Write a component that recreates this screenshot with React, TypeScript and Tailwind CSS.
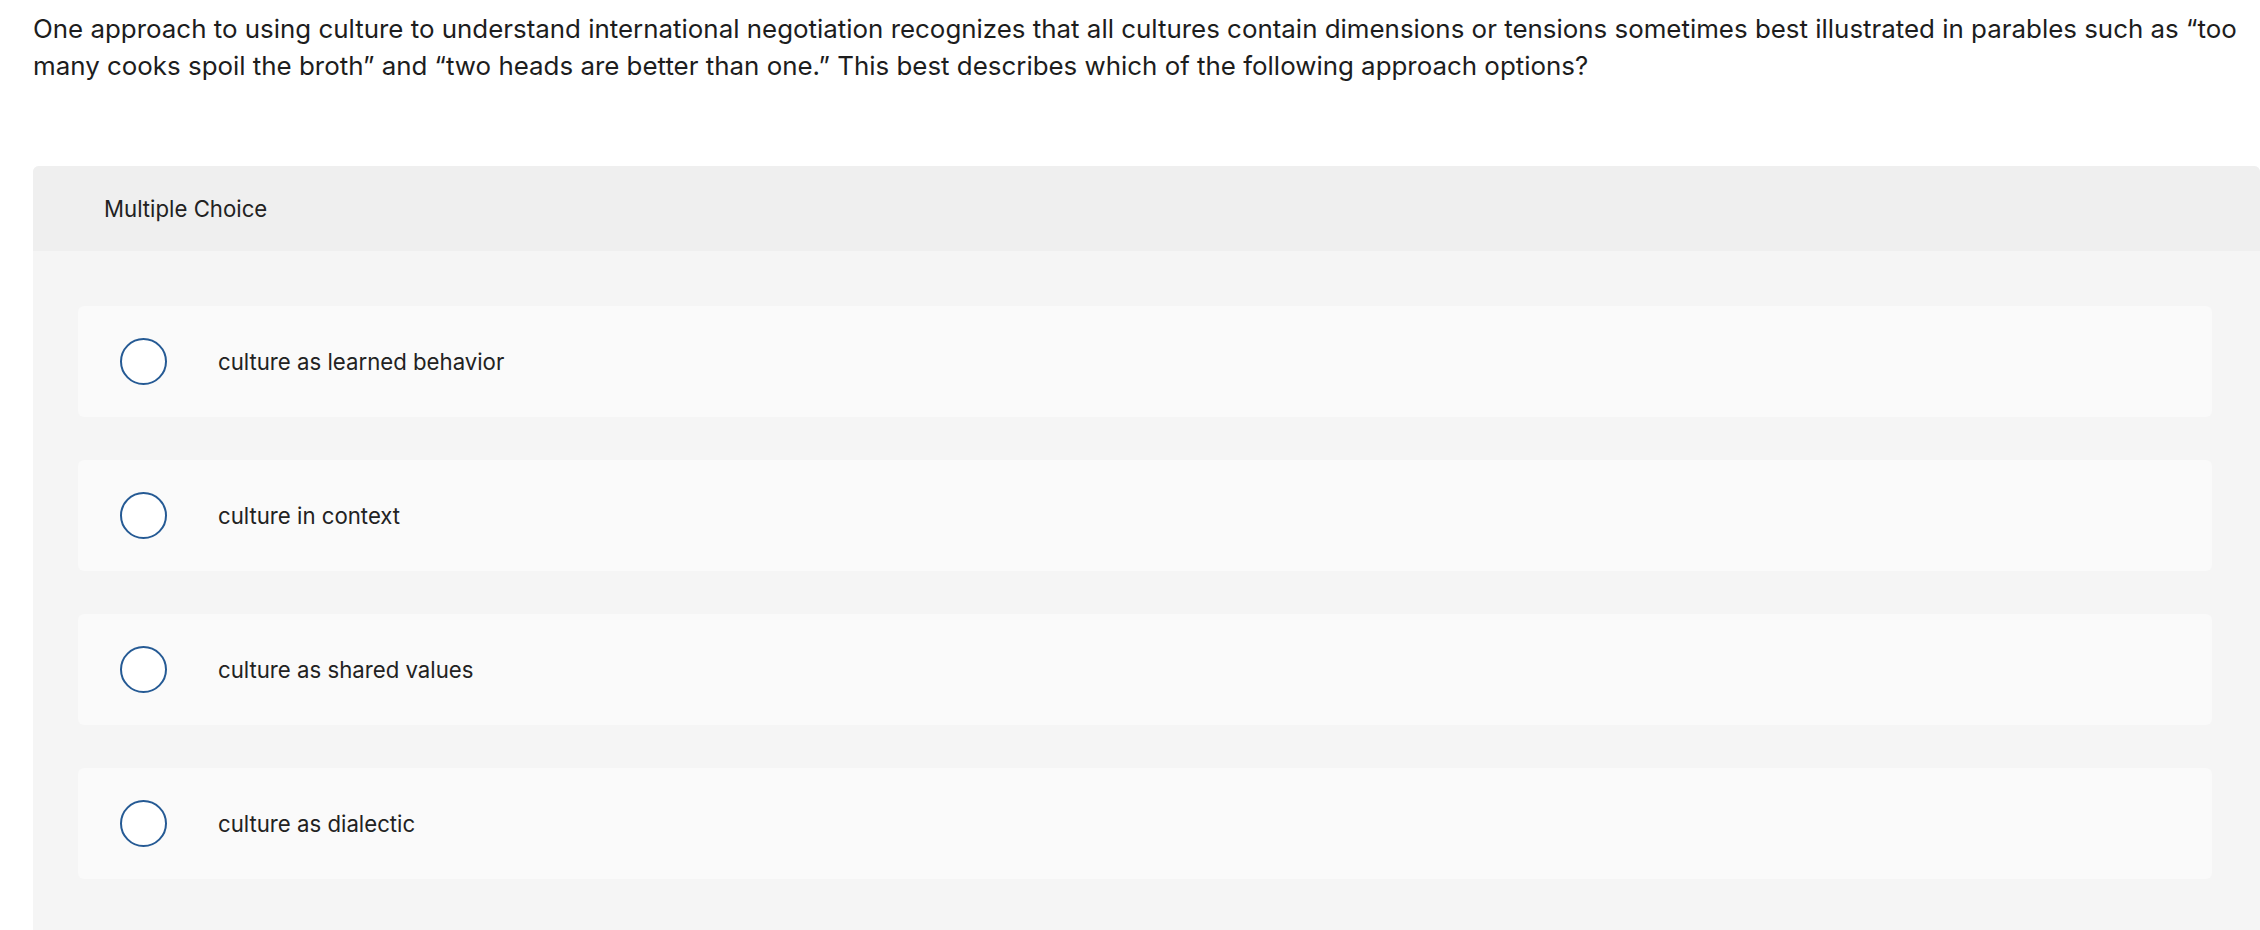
import React from "react";

const options = [
  "culture as learned behavior",
  "culture in context",
  "culture as shared values",
  "culture as dialectic",
];

function Option({ label }: { label: string }) {
  return (
    <label className="flex items-center h-[111px] pl-[42px] bg-[#fafafa] rounded-[6px] cursor-pointer">
      <span className="w-[47px] h-[47px] rounded-full border-2 border-[#255a94] bg-white shrink-0" />
      <span className="ml-[51px] text-[22.2px] text-[#222]">{label}</span>
    </label>
  );
}

export default function App() {
  const font = { fontFamily: "Inter, 'Noto Sans', sans-serif" };
  return (
    <div className="min-h-screen bg-white pl-[33px] pt-[10px]" style={font}>
      <p className="text-[25.9px] leading-[37px] text-[#1d1d1d] pr-[10px]">
        One approach to using culture to understand international negotiation recognizes that all cultures
        contain dimensions or tensions sometimes best illustrated in parables such as “too many cooks spoil
        the broth” and “two heads are better than one.” This best describes which of the following approach
        options?
      </p>
      <div className="mt-[82px] rounded-t-[6px] bg-[#f5f5f5] pb-[70px]">
        <div className="h-[85px] flex items-center pl-[71px] bg-[#efefef] rounded-t-[6px] text-[22.2px] text-[#222]">
          Multiple Choice
        </div>
        <div className="flex flex-col gap-[43px] pt-[55px] pl-[45px] pr-[48px]">
          {options.map((o) => (
            <Option key={o} label={o} />
          ))}
        </div>
      </div>
    </div>
  );
}
